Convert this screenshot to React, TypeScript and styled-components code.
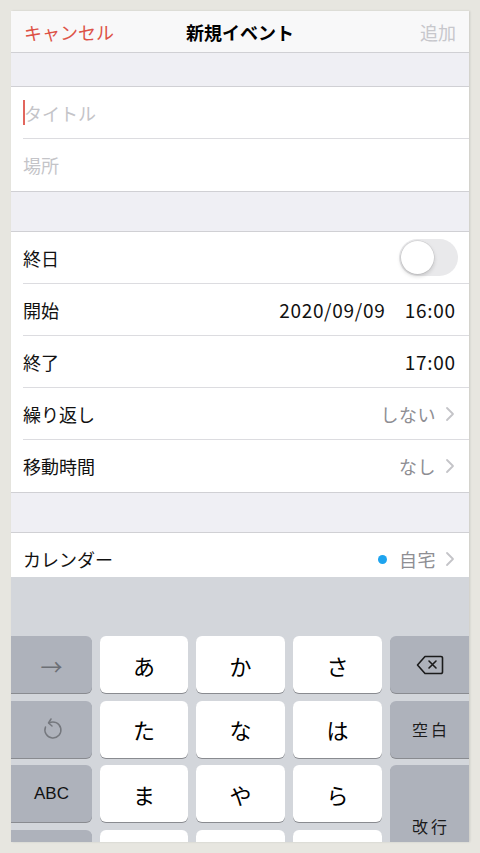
import React from "react";
import styled, { createGlobalStyle } from "styled-components";

const GlobalStyle = createGlobalStyle`
    html, body {
        margin: 0;
        padding: 0;
        background: #e7e6e0;
    }
    * {
        box-sizing: border-box;
    }
`;

const Frame = styled.div`
    width: 480px;
    height: 853px;
    padding: 11px 11px 11px 11px;
    font-family: "Noto Sans CJK JP", "Noto Sans", sans-serif;
`;

const Screen = styled.div`
    width: 458px;
    height: 831px;
    display: flex;
    flex-direction: column;
    overflow: hidden;
    background: #efeff4;
    box-shadow: 1px 0 2px rgba(0, 0, 0, 0.12);
`;

const NavBar = styled.div`
    height: 42px;
    flex-shrink: 0;
    display: flex;
    align-items: center;
    justify-content: space-between;
    padding: 0 13px;
    background: #f8f8f9;
    border-bottom: 1px solid #d0d0d4;
`;

const NavButton = styled.span<{ $muted?: boolean }>`
    font-size: 18px;
    color: ${(p) => (p.$muted ? "#c7c7cc" : "#dd5247")};
    width: 100px;
    text-align: ${(p) => (p.$muted ? "right" : "left")};
`;

const NavTitle = styled.span`
    font-size: 18px;
    font-weight: 700;
    color: #000;
`;

const Form = styled.div`
    flex: 1;
    overflow: hidden;
`;

const Spacer = styled.div<{ $h: number }>`
    height: ${(p) => p.$h}px;
    background: #efeff4;
    border-bottom: 1px solid #d0d0d4;
`;

const Section = styled.div`
    background: #fff;
    border-bottom: 1px solid #d0d0d4;
`;

const Row = styled.div`
    height: 52px;
    display: flex;
    align-items: center;
    margin-left: 12px;
    padding-right: 14px;
    border-bottom: 1px solid #dcdce0;

    &:last-child {
        border-bottom: none;
    }
`;

const Label = styled.span<{ $placeholder?: boolean }>`
    font-size: 18px;
    color: ${(p) => (p.$placeholder ? "#c4c4c8" : "#111")};
    flex: 1;
    display: flex;
    align-items: center;
`;

const Cursor = styled.span`
    width: 2px;
    height: 25px;
    background: #e2665e;
    margin-right: -1px;
`;

const Value = styled.span<{ $gray?: boolean }>`
    font-size: 18px;
    color: ${(p) => (p.$gray ? "#8e8e93" : "#111")};
    display: flex;
    align-items: center;
    letter-spacing: 0.5px;
`;

const NumberText = styled.span`
    font-size: 19px;
    color: #111;
    margin-left: 20px;
    letter-spacing: 0.7px;
    margin-right: -0.7px;
`;

const Chevron = styled.svg`
    width: 10px;
    height: 16px;
    margin-left: 9px;
`;

const Dot = styled.span`
    width: 9px;
    height: 9px;
    border-radius: 50%;
    background: #1ea4ef;
    margin-right: 12px;
`;

const Toggle = styled.div`
    width: 59px;
    height: 37px;
    border-radius: 19px;
    background: #e9e9eb;
    padding: 2px;
    margin-right: -3px;
`;

const Knob = styled.div`
    width: 33px;
    height: 33px;
    border-radius: 50%;
    background: #fff;
    box-shadow: 0 2px 4px rgba(0, 0, 0, 0.18), 0 0 0 0.5px rgba(0, 0, 0, 0.1);
`;

const Keyboard = styled.div`
    height: 265px;
    flex-shrink: 0;
    background: #d3d6db;
    padding-top: 59px;
`;

const KeyGrid = styled.div`
    display: grid;
    grid-template-columns: 81px 88px 89px 89px 1fr;
    grid-auto-rows: 57px;
    column-gap: 8px;
    row-gap: 7.5px;
`;

const Key = styled.div<{ $special?: boolean; $tall?: boolean; $left?: boolean; $right?: boolean }>`
    display: flex;
    align-items: center;
    justify-content: center;
    background: ${(p) => (p.$special ? "#aeb2bb" : "#fff")};
    border-radius: ${(p) => (p.$left ? "0 6px 6px 0" : p.$right ? "6px 0 0 6px" : "6px")};
    box-shadow: 0 1px 0 #898b90;
    font-size: 22px;
    color: #000;
    grid-row: ${(p) => (p.$tall ? "span 2" : "auto")};
`;

const SmallText = styled.span`
    font-size: 16px;
    color: #1b1b1b;
    letter-spacing: 3px;
    margin-right: -3px;
`;

const AbcText = styled.span`
    font-family: "Liberation Sans", Arial, sans-serif;
    font-size: 17px;
    color: #111;
`;

const ArrowText = styled.span`
    font-size: 22px;
    color: #6c6f75;
`;

const ChevronIcon = () => (
    <Chevron viewBox="0 0 10 16">
        <path d="M2 2 L8 8 L2 14" fill="none" stroke="#c4c4c8" strokeWidth="1.8" strokeLinecap="round" strokeLinejoin="round" />
    </Chevron>
);

const UndoIcon = () => (
    <svg width="22" height="24" viewBox="0 0 22 24">
        <path d="M8 6 A8 8 0 1 1 4.5 10" fill="none" stroke="#75787e" strokeWidth="1.5" strokeLinecap="round" />
        <path d="M10 2 L7.5 6 L11 9" fill="none" stroke="#75787e" strokeWidth="1.5" strokeLinecap="round" strokeLinejoin="round" />
    </svg>
);

const DeleteIcon = () => (
    <svg width="28" height="20" viewBox="0 0 28 20">
        <path d="M9 1.5 H25 A1.5 1.5 0 0 1 26.5 3 V17 A1.5 1.5 0 0 1 25 18.5 H9 L1.5 10 Z" fill="none" stroke="#1b1b1b" strokeWidth="1.6" strokeLinejoin="round" />
        <path d="M13 6 L20 13 M20 6 L13 13" stroke="#1b1b1b" strokeWidth="1.6" strokeLinecap="round" />
    </svg>
);

const App = () => {
    return (
        <Frame>
            <GlobalStyle />
            <Screen>
                <NavBar>
                    <NavButton>キャンセル</NavButton>
                    <NavTitle>新規イベント</NavTitle>
                    <NavButton $muted>追加</NavButton>
                </NavBar>
                <Form>
                    <Spacer $h={34} />
                    <Section>
                        <Row>
                            <Label $placeholder>
                                <Cursor />
                                タイトル
                            </Label>
                        </Row>
                        <Row>
                            <Label $placeholder>場所</Label>
                        </Row>
                    </Section>
                    <Spacer $h={40} />
                    <Section>
                        <Row>
                            <Label>終日</Label>
                            <Toggle>
                                <Knob />
                            </Toggle>
                        </Row>
                        <Row>
                            <Label>開始</Label>
                            <NumberText>2020/09/09</NumberText>
                            <NumberText>16:00</NumberText>
                        </Row>
                        <Row>
                            <Label>終了</Label>
                            <NumberText>17:00</NumberText>
                        </Row>
                        <Row>
                            <Label>繰り返し</Label>
                            <Value $gray>しない</Value>
                            <ChevronIcon />
                        </Row>
                        <Row>
                            <Label>移動時間</Label>
                            <Value $gray>なし</Value>
                            <ChevronIcon />
                        </Row>
                    </Section>
                    <Spacer $h={40} />
                    <Section>
                        <Row>
                            <Label>カレンダー</Label>
                            <Dot />
                            <Value $gray>自宅</Value>
                            <ChevronIcon />
                        </Row>
                    </Section>
                </Form>
                <Keyboard>
                    <KeyGrid>
                        <Key $special $left>
                            <ArrowText>→</ArrowText>
                        </Key>
                        <Key>あ</Key>
                        <Key>か</Key>
                        <Key>さ</Key>
                        <Key $special $right>
                            <DeleteIcon />
                        </Key>

                        <Key $special $left>
                            <UndoIcon />
                        </Key>
                        <Key>た</Key>
                        <Key>な</Key>
                        <Key>は</Key>
                        <Key $special $right>
                            <SmallText>空白</SmallText>
                        </Key>

                        <Key $special $left>
                            <AbcText>ABC</AbcText>
                        </Key>
                        <Key>ま</Key>
                        <Key>や</Key>
                        <Key>ら</Key>
                        <Key $special $right $tall>
                            <SmallText>改行</SmallText>
                        </Key>

                        <Key $special $left />
                        <Key />
                        <Key />
                        <Key />
                    </KeyGrid>
                </Keyboard>
            </Screen>
        </Frame>
    );
};

export default App;
